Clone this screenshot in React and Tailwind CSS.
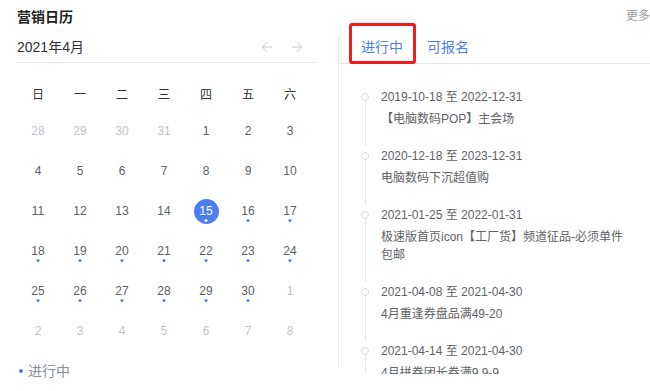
import { ArrowLeft, ArrowRight } from "lucide-react";

const weekDays = ["日", "一", "二", "三", "四", "五", "六"];

// april 2021, starts on a thursday
const buildDays = () => {
  const days = [];
  [28, 29, 30, 31].forEach((d) => days.push({ d, other: true }));
  for (let d = 1; d <= 30; d++) days.push({ d, other: false });
  for (let d = 1; d <= 8; d++) days.push({ d, other: true });
  return days;
};

const events = [
  { date: "2019-10-18 至 2022-12-31", title: "【电脑数码POP】主会场" },
  { date: "2020-12-18 至 2023-12-31", title: "电脑数码下沉超值购" },
  { date: "2021-01-25 至 2022-01-31", title: "极速版首页icon【工厂货】频道征品-必须单件包邮" },
  { date: "2021-04-08 至 2021-04-30", title: "4月重逢券盘品满49-20" },
  { date: "2021-04-14 至 2021-04-30", title: "4月拼券团长券满9.9-9" },
];

export default function App() {
  const days = buildDays();

  return (
    <div
      className="relative w-[650px] h-[391px] overflow-hidden bg-white"
      style={{ fontFamily: '"Liberation Sans", "Noto Sans CJK SC", sans-serif' }}
    >
      {/* header */}
      <div className="flex justify-between items-start h-[37px] pt-[8px] pl-[17px]">
        <span className="text-[14px] leading-[18px] font-bold text-[#1f1f1f]">营销日历</span>
        <span className="text-[12px] leading-[16px] text-[#999999]">更多</span>
      </div>

      <div className="flex">
        {/* calendar */}
        <div className="ml-[17px] w-[298px]">
          <div className="flex items-center justify-between h-[26px] pb-[6px] border-b border-[#e4e7ed]">
            <span className="text-[14px] leading-[20px] text-[#303133]">2021年4月</span>
            <div className="flex items-center gap-[14px] pr-[10px] text-[#bfc4cd]">
              <ArrowLeft size={16} strokeWidth={1.4} />
              <ArrowRight size={16} strokeWidth={1.4} />
            </div>
          </div>

          <div className="grid grid-cols-7 w-[294px] mt-[16px]">
            {weekDays.map((w) => (
              <div key={w} className="h-[32px] flex items-center justify-center text-[12px] text-[#303133]">
                {w}
              </div>
            ))}
            {days.map((item, i) => {
              const selected = !item.other && item.d === 15;
              const hasDot = !item.other && item.d >= 15;
              return (
                <div key={i} className="h-[40px] flex items-center justify-center">
                  <div
                    className={`relative w-[25px] h-[25px] rounded-full flex items-center justify-center text-[12px] leading-[14px] ${
                      selected
                        ? "bg-[#4d7ef0] text-white"
                        : item.other
                        ? "text-[#c0c4cc]"
                        : "text-[#5b5f66]"
                    }`}
                  >
                    {item.d}
                    {hasDot && (
                      <span
                        className={`absolute left-1/2 -translate-x-1/2 top-[20px] w-[3px] h-[3px] rounded-full ${
                          selected ? "bg-white" : "bg-[#4d7ef0]"
                        }`}
                      />
                    )}
                  </div>
                </div>
              );
            })}
          </div>

          <div className="flex items-center mt-[12px] h-[16px]">
            <span className="w-[4px] h-[4px] rounded-full bg-[#4d7ef0] ml-[2px] mr-[5px]" />
            <span className="text-[14px] leading-[16px] text-[#8a8f99]">进行中</span>
          </div>
        </div>

        {/* activity list */}
        <div className="ml-[23px] flex-1 h-[330px] border-l border-[#e4e7ed]">
          <div className="flex gap-[24px] h-[27px] pb-[6px] pl-[22px] border-b border-[#e4e7ed] text-[14px] leading-[20px] text-[#4d7ef0]">
            <span>进行中</span>
            <span>可报名</span>
          </div>

          <div className="h-[310px] overflow-hidden pt-[23px] pl-[22px]">
            {events.map((ev, i) => (
              <div key={i} className="flex">
                <div className="w-[8px] flex flex-col items-center">
                  <span className="mt-[6px] w-[8px] h-[8px] rounded-full border border-[#dcdfe6] bg-white" />
                  <span className="flex-1 w-px bg-[#e4e7ed]" />
                </div>
                <div className="ml-[12px] w-[250px] pb-[18px] text-[12px] text-[#606266]">
                  <div className="leading-[20px]">{ev.date}</div>
                  <div className="mt-[3px] leading-[18px]">{ev.title}</div>
                </div>
              </div>
            ))}
          </div>
        </div>
      </div>

      {/* highlight box */}
      <div className="absolute left-[349px] top-[23px] w-[67px] h-[41px] border-[3px] border-[#ee1c1c] rounded-[3px]" />
    </div>
  );
}
